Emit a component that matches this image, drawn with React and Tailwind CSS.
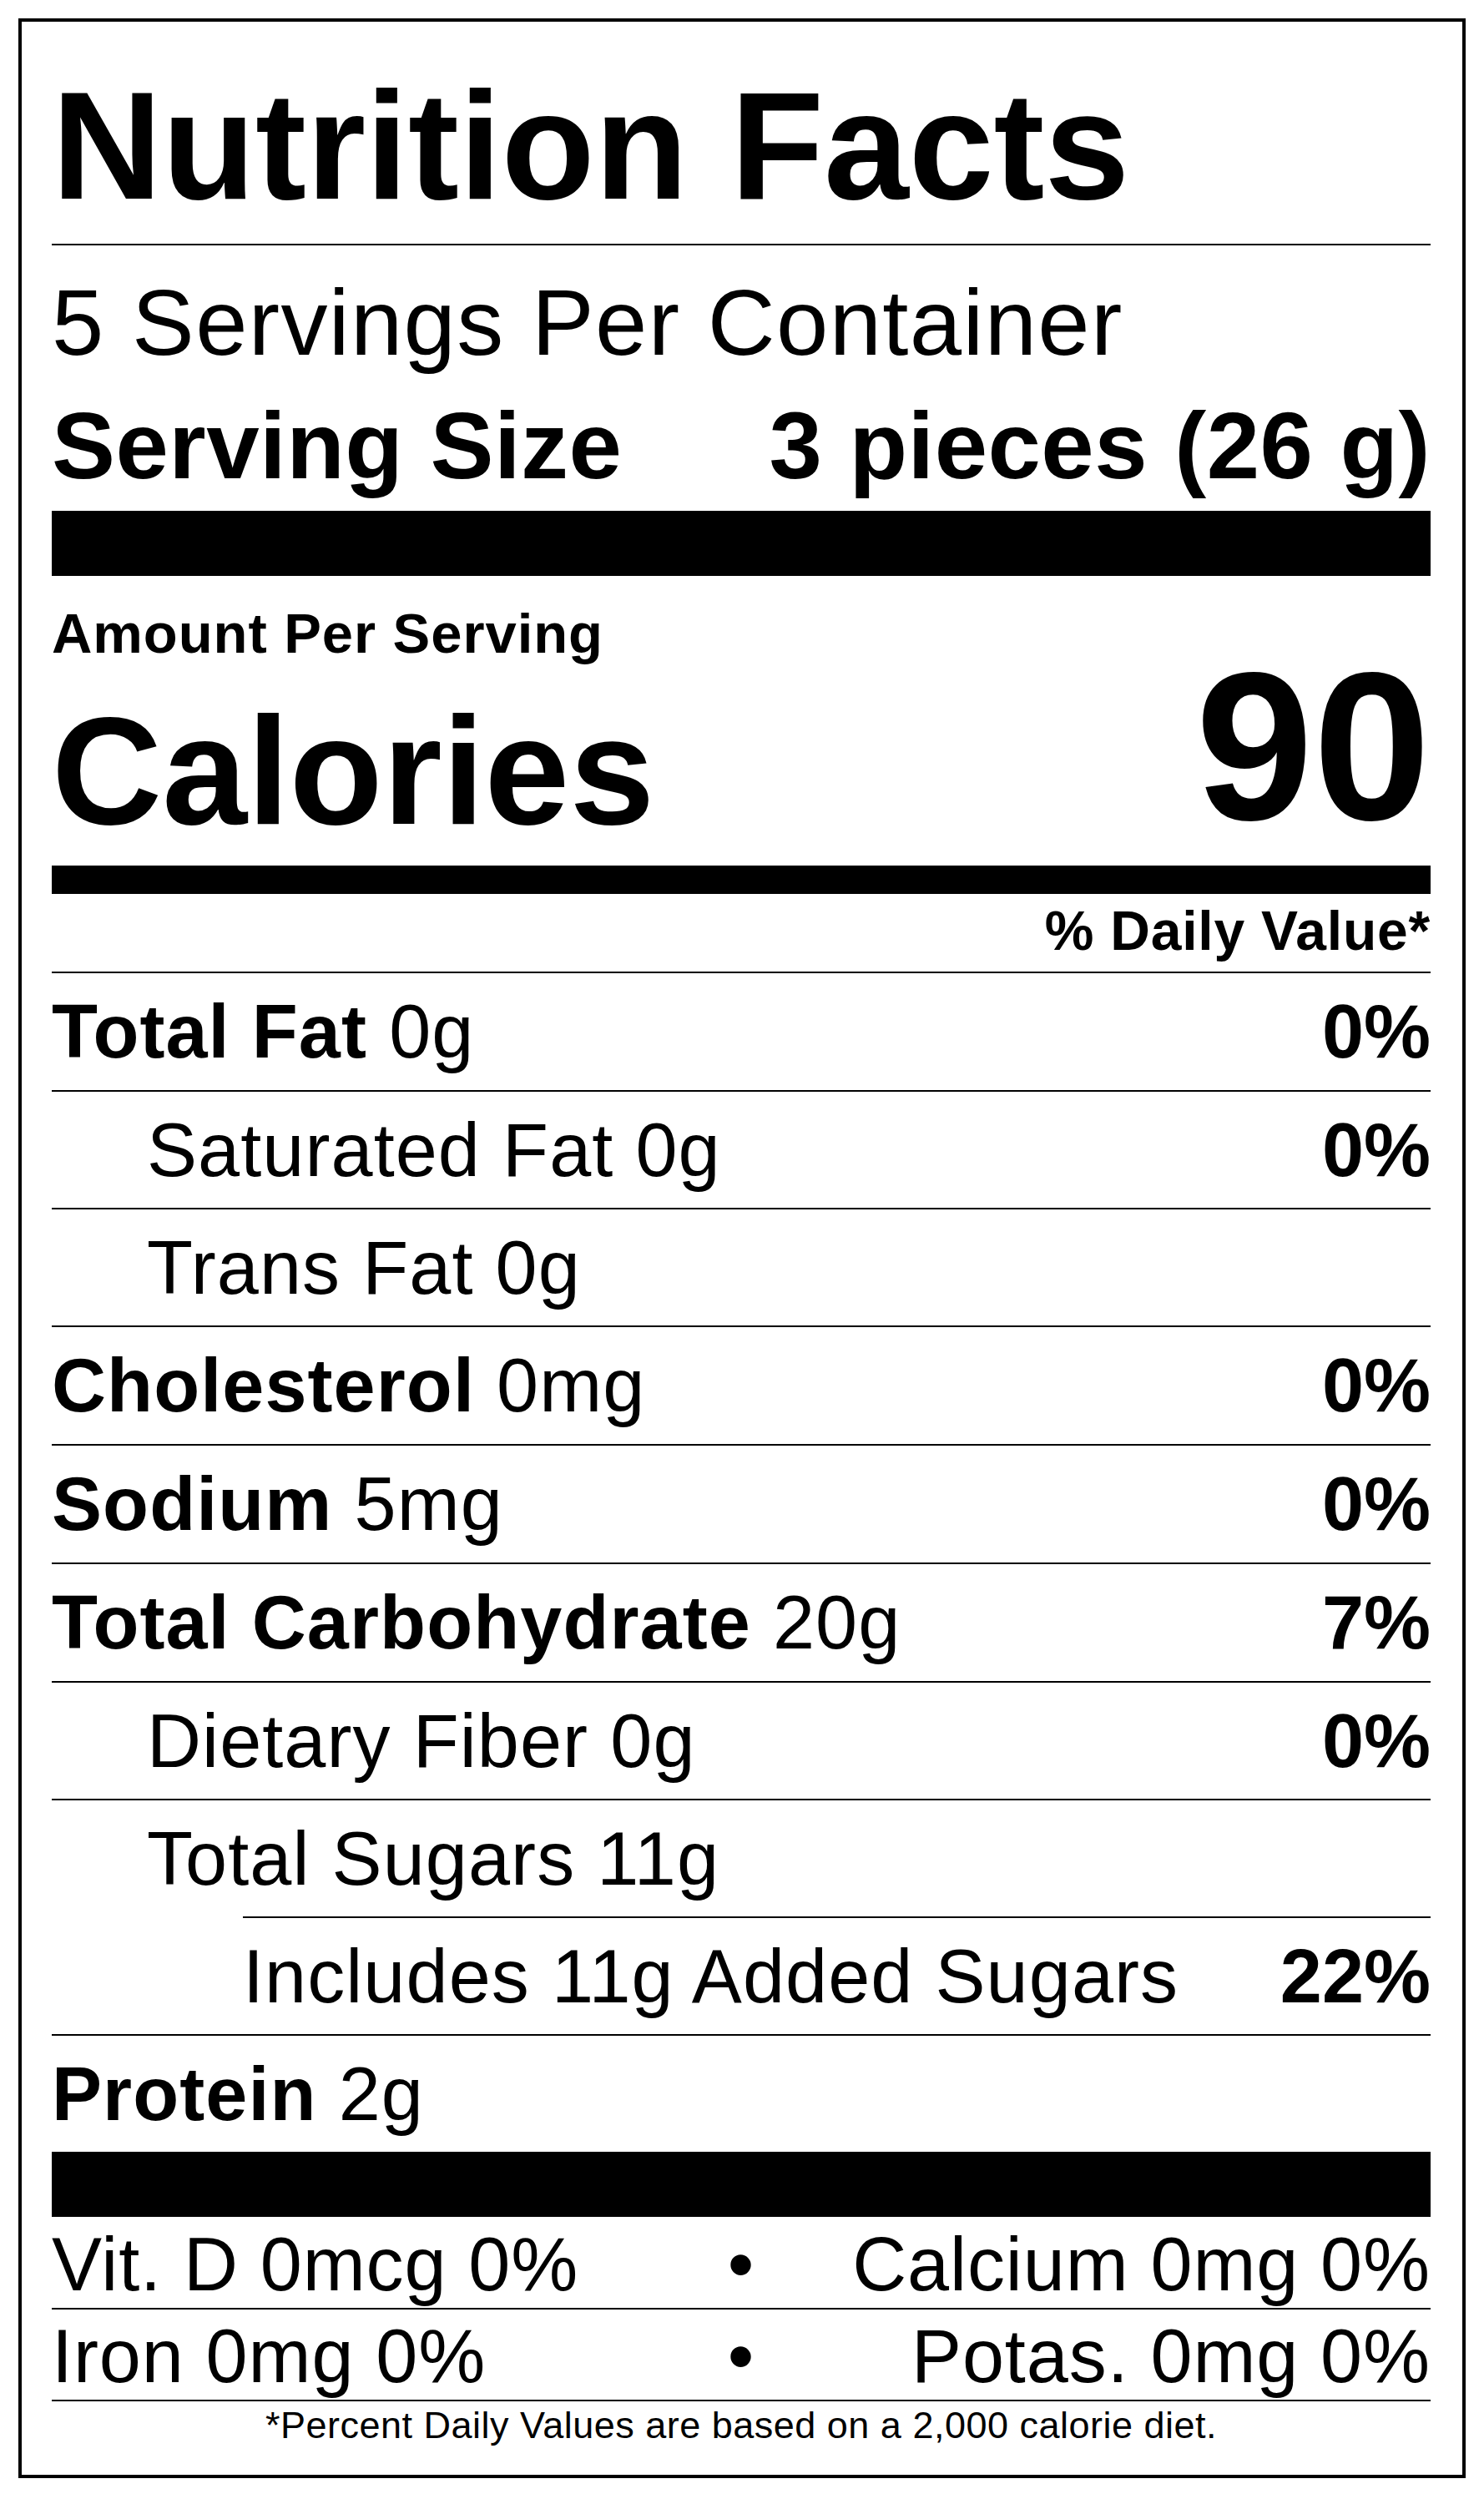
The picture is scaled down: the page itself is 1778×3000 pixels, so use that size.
const rows = [
  { label: 'Total Fat', amount: '0g', dv: '0%', bold: true, h: 'h-[142px]' },
  { label: 'Saturated Fat 0g', dv: '0%', indent: 1, h: 'h-[141px]' },
  { label: 'Trans Fat 0g', indent: 1, h: 'h-[141px]' },
  { label: 'Cholesterol', amount: '0mg', dv: '0%', bold: true, h: 'h-[142px]' },
  { label: 'Sodium', amount: '5mg', dv: '0%', bold: true, h: 'h-[142px]' },
  { label: 'Total Carbohydrate', amount: '20g', dv: '7%', bold: true, h: 'h-[142px]' },
  { label: 'Dietary Fiber 0g', dv: '0%', indent: 1, h: 'h-[141px]' },
  { label: 'Total Sugars 11g', indent: 1, h: 'h-[141px]' },
  { label: 'Includes 11g Added Sugars', dv: '22%', indent: 2, h: 'h-[141px]' },
  { label: 'Protein', amount: '2g', bold: true, h: 'h-[141px]' },
]

function NutrientRow({ label, amount, dv, bold, indent, h }) {
  return (
    <div
      className={`flex items-center justify-between border-t-2 border-black text-[90px] leading-none tracking-[0.012em] ${h} ${
        indent === 2 ? 'ml-[229px]' : ''
      }`}
    >
      <div className={indent === 1 ? 'pl-[114px]' : ''}>
        {bold ? (
          <>
            <span className="font-bold">{label}</span> {amount}
          </>
        ) : (
          label
        )}
      </div>
      {dv && <div className="font-bold tracking-normal">{dv}</div>}
    </div>
  )
}

export default function App() {
  return (
    <div className="min-h-[3000px] w-full bg-white pt-[22px] pl-[22px] text-black font-['Liberation_Sans',Arial,sans-serif]">
      <div className="w-[1734px] border-[4px] border-black pl-[36px] pr-[38px] pb-[37px]">
        {/* header */}
        <h1 className="pt-[57px] text-[183px] font-bold leading-none">Nutrition Facts</h1>
        <div className="mt-[26px] h-[2px] bg-black" />
        <div className="mt-[37px] text-[112px] leading-none tracking-[0.012em]">5 Servings Per Container</div>
        <div className="mt-[34px] flex justify-between text-[114px] font-bold leading-none tracking-[0.004em]">
          <span>Serving Size</span>
          <span>3 pieces (26 g)</span>
        </div>
        <div className="mt-[21px] h-[78px] bg-black" />

        {/* calories */}
        <div className="mt-[35px] text-[67px] font-bold leading-none tracking-[0.014em]">Amount Per Serving</div>
        <div className="mt-[11px] flex items-end justify-between font-bold">
          <span className="text-[183px] leading-none">Calories</span>
          <span className="mb-[29px] text-[253px] leading-[183px]">90</span>
        </div>
        <div className="mt-[22px] h-[34px] bg-black" />
        <div className="mt-[11px] text-right text-[66px] font-bold leading-none tracking-[0.012em]">% Daily Value*</div>

        {/* nutrients */}
        <div className="mt-[16px]">
          {rows.map((r) => (
            <NutrientRow key={r.label} {...r} />
          ))}
        </div>
        <div className="h-[78px] bg-black" />

        {/* vitamins & minerals */}
        <div className="grid h-[111px] grid-cols-[1fr_auto_1fr] items-center border-b-2 border-black pt-[4px] text-[90px] leading-none tracking-[0.01em]">
          <span>Vit. D 0mcg 0%</span>
          <span>•</span>
          <span className="text-right">Calcium 0mg 0%</span>
        </div>
        <div className="grid h-[110px] grid-cols-[1fr_auto_1fr] items-center border-b-2 border-black pt-[4px] text-[90px] leading-none tracking-[0.01em]">
          <span>Iron 0mg 0%</span>
          <span>•</span>
          <span className="text-right">Potas. 0mg 0%</span>
        </div>
        <p className="mt-[6px] text-center text-[45px] leading-none tracking-[0.011em]">
          *Percent Daily Values are based on a 2,000 calorie diet.
        </p>
      </div>
    </div>
  )
}
